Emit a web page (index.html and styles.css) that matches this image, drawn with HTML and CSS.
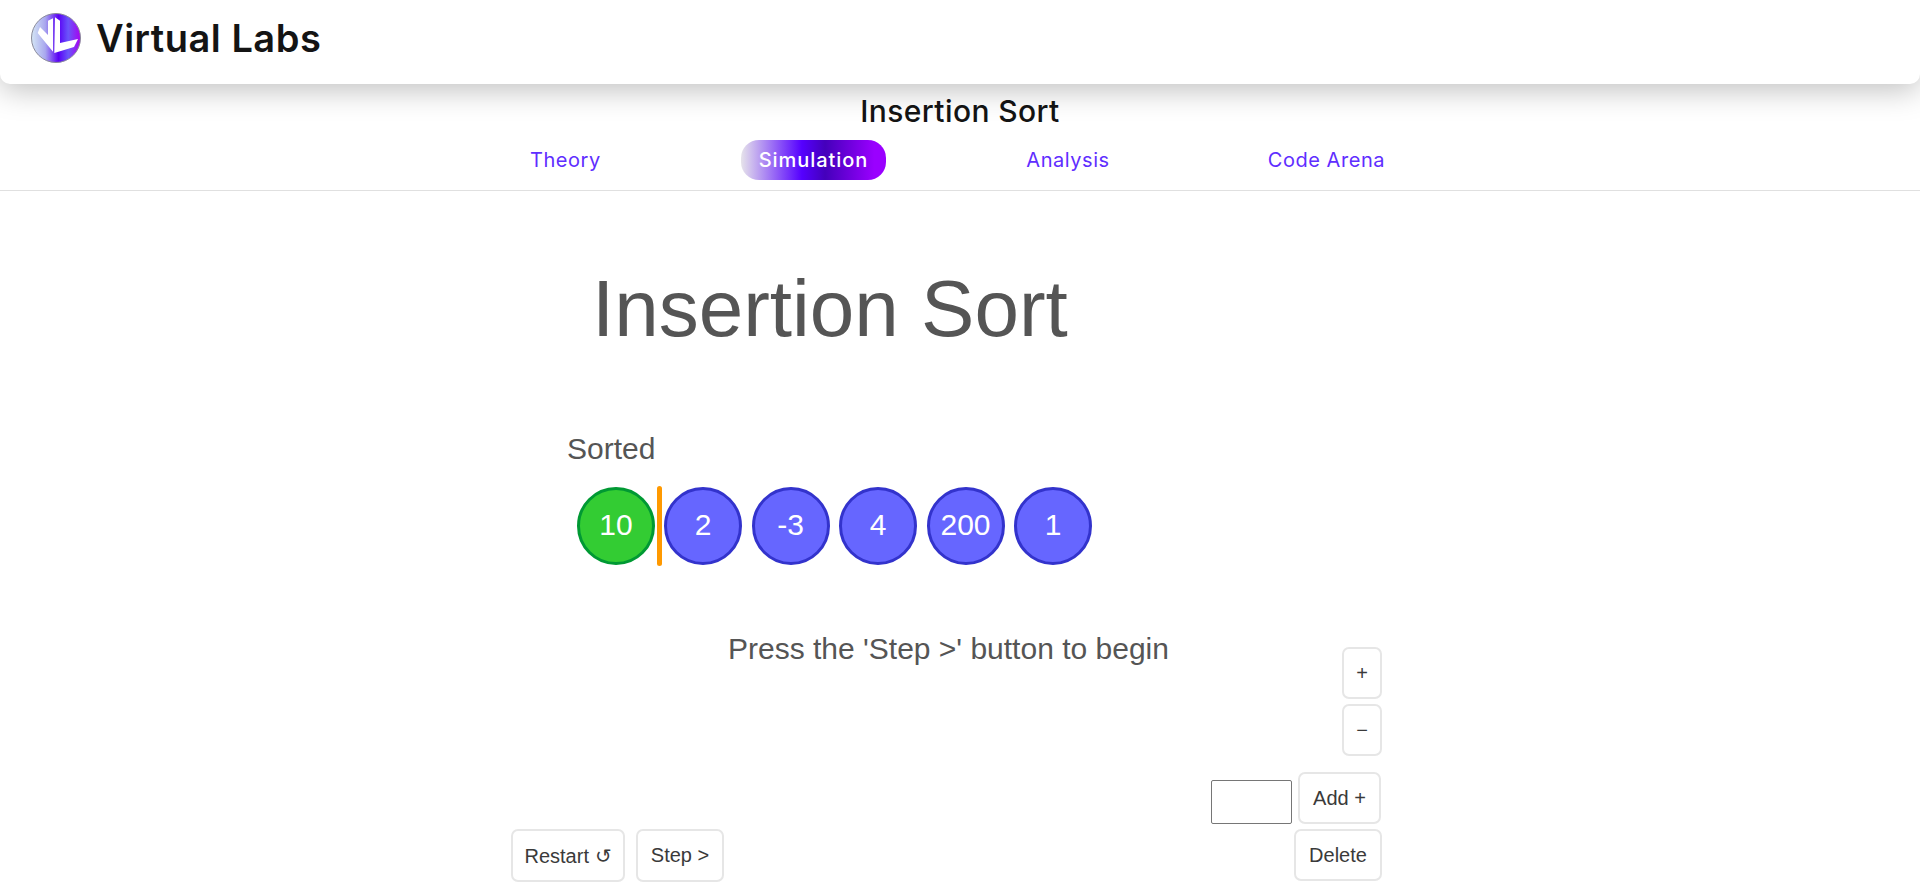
FILE: index.html
```html
<!DOCTYPE html>
<html lang="en">
<head>
<meta charset="utf-8">
<title>Insertion Sort - Virtual Labs</title>
<link rel="stylesheet" href="styles.css">
</head>
<body>
<header class="topbar">
  <svg class="logo" viewBox="0 0 50 50" aria-hidden="true">
    <defs>
      <linearGradient id="logoGrad" x1="0" y1="0" x2="1" y2="0">
        <stop offset="0" stop-color="#d4e6f5"/>
        <stop offset="0.28" stop-color="#a9a8ee"/>
        <stop offset="0.55" stop-color="#5a00f5"/>
        <stop offset="0.75" stop-color="#6a55fa"/>
        <stop offset="1" stop-color="#a800f0"/>
      </linearGradient>
    </defs>
    <circle cx="25" cy="25" r="24.5" fill="url(#logoGrad)" stroke="#8a8a9a" stroke-width="1"/>
    <polygon points="6.7,20 9,14 17,22 17,7.7 22,5.3 22,38.7" fill="#fff"/>
    <polygon points="24,4.3 29,7.7 29,30 47,26 43,34 23.3,40" fill="#fff"/>
  </svg>
  <span class="brand">Virtual Labs</span>
</header>
<section class="subhead">
  <h2 class="exp-title">Insertion Sort</h2>
  <nav class="tabs">
    <a class="tab">Theory</a>
    <a class="tab tab-active">Simulation</a>
    <a class="tab">Analysis</a>
    <a class="tab">Code Arena</a>
  </nav>
</section>
<main class="sim">
  <h1 class="sim-title">Insertion Sort</h1>
  <div class="sorted-label">Sorted</div>
  <div class="array">
    <div class="node node-sorted">10</div>
    <div class="divider"></div>
    <div class="node">2</div>
    <div class="node">-3</div>
    <div class="node">4</div>
    <div class="node">200</div>
    <div class="node">1</div>
  </div>
  <div class="lower">
    <div class="lower-left">
      <p class="message">Press the 'Step &gt;' button to begin</p>
      <div class="btn-row">
        <button class="btn">Restart ↺</button>
        <button class="btn btn-step">Step &gt;</button>
      </div>
    </div>
    <div class="lower-right">
      <button class="btn btn-small">+</button>
      <button class="btn btn-small">−</button>
      <div class="add-row">
        <input class="num-input" type="text">
        <button class="btn btn-add">Add +</button>
      </div>
      <button class="btn btn-delete">Delete</button>
    </div>
  </div>
</main>
</body>
</html>
```
FILE: styles.css
```css
* { box-sizing: border-box; }
html, body { margin: 0; padding: 0; height: 895px; overflow: hidden; background: #fff; }
body { font-family: "Liberation Sans", Arial, sans-serif; color: #555; }

.topbar {
  height: 84px;
  display: flex;
  align-items: center;
  padding: 0 0 8px 31px;
  gap: 15px;
  background: #fff;
  border-radius: 0 0 10px 10px;
  box-shadow: 0 6px 30px rgba(0, 0, 0, 0.25);
  position: relative;
}
.logo { width: 50px; height: 50px; display: block; }
.brand {
  font-family: Inter, "Noto Sans", sans-serif;
  font-weight: 600;
  font-size: 38px;
  letter-spacing: 0.5px;
  color: #141414;
}

.subhead {
  height: 107px;
  border-bottom: 1px solid #e0e0e0;
  display: flex;
  flex-direction: column;
  align-items: center;
  padding-top: 8px;
}
.exp-title {
  margin: 0;
  font-family: Inter, "Noto Sans", sans-serif;
  font-weight: 500;
  font-size: 30px;
  line-height: 38px;
  letter-spacing: 0.4px;
  color: #141414;
}
.tabs {
  display: flex;
  gap: 122px;
  margin-top: 10px;
  padding-right: 5px;
}
.tab {
  height: 40px;
  line-height: 40px;
  padding: 0 18px;
  border-radius: 18px;
  font-family: Inter, "Noto Sans", sans-serif;
  font-size: 20px;
  letter-spacing: 0.55px;
  color: #5f2eff;
}
.tab-active {
  color: #fff;
  font-weight: 500;
  letter-spacing: 0.95px;
  background: linear-gradient(90deg, #e6e3ea 0%, #5500ff 42%, #4400bb 58%, #9a00ff 92%);
}

.sim {
  width: 898px;
  margin: 0 auto;
  padding-right: 27px;
}
.sim-title {
  margin: 72px 0 0 81px;
  font-weight: 400;
  font-size: 80px;
  line-height: 92px;
}
.sorted-label {
  margin: 77px 0 0 56px;
  font-size: 30px;
  line-height: 33px;
}
.array {
  display: flex;
  align-items: center;
  gap: 9.5px;
  margin: 21px 0 0 66px;
  height: 80px;
}
.node {
  width: 78px;
  height: 78px;
  border-radius: 50%;
  border: 3px solid #3333cc;
  background: #6666ff;
  color: #fff;
  font-size: 30px;
  padding-bottom: 3px;
  display: flex;
  align-items: center;
  justify-content: center;
}
.node-sorted { background: #33cc33; border-color: #009933; }
.divider {
  width: 5px;
  height: 80px;
  border-radius: 3px;
  background: #ff9900;
  margin: 0 -7.5px;
}

.lower {
  display: flex;
  justify-content: space-between;
  margin-top: 81px;
  height: 236px;
}
.lower-left {
  width: 660px;
  margin-top: -15px;
  display: flex;
  flex-direction: column;
  justify-content: space-between;
}
.message {
  margin: 0 0 0 217px;
  font-size: 30px;
  line-height: 33px;
}
.btn-row { display: flex; gap: 11px; padding-bottom: 1px; }
.btn {
  height: 53px;
  padding: 0 12px;
  border: 2.5px solid #e6e6e6;
  border-radius: 7px;
  background: #fff;
  color: #3a3a3a;
  font-family: "Liberation Sans", Arial, sans-serif;
  font-size: 20px;
}
.btn-row .btn { width: 114px; padding: 0; }
.btn-row .btn-step { width: 88px; }
.lower-right {
  display: flex;
  flex-direction: column;
  align-items: flex-end;
  gap: 5px;
}
.btn.btn-small { width: 40px; height: 52px; padding: 0; }
.add-row {
  display: flex;
  align-items: flex-end;
  gap: 6px;
  margin-top: 11px;
  padding-right: 1px;
}
.num-input {
  width: 81px;
  height: 44px;
  border: 1px solid #767676;
  border-radius: 2px;
  background: #fff;
}
.btn.btn-add { width: 83px; height: 52px; padding: 0; }
.btn.btn-delete { width: 88px; height: 52px; padding: 0; }
```
